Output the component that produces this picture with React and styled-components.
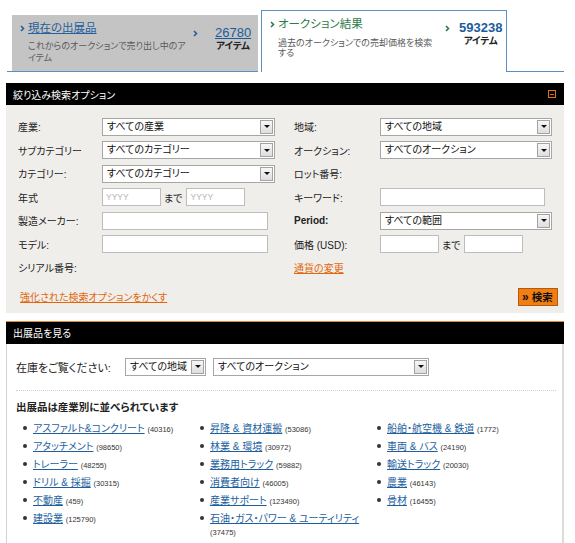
import React from "react";
import styled, { createGlobalStyle } from "styled-components";

const GlobalStyle = createGlobalStyle`
  body {
    margin: 0;
    background: #fff;
    font-family: "Liberation Sans", "Noto Sans CJK JP", sans-serif;
    font-feature-settings: "palt";
    color: #222;
  }
`;

const BLUE_LINE = "#5b8fc0";
const LINK_BLUE = "#1d5f9e";
const ORANGE = "#e2670c";

const leftFields = [
  { label: "産業:", kind: "select", value: "すべての産業", w: 173 },
  { label: "サブカテゴリー", kind: "select", value: "すべてのカテゴリー", w: 173 },
  { label: "カテゴリー:", kind: "select", value: "すべてのカテゴリー", w: 173 },
  { label: "年式", kind: "range", w: 59, placeholder: "YYYY" },
  { label: "製造メーカー:", kind: "input", w: 166 },
  { label: "モデル:", kind: "input", w: 166 },
  { label: "シリアル番号:", kind: "none" },
];

const rightFields = [
  { label: "地域:", kind: "select", value: "すべての地域", w: 172 },
  { label: "オークション:", kind: "select", value: "すべてのオークション", w: 172 },
  { label: "ロット番号:", kind: "none" },
  { label: "キーワード:", kind: "input", w: 165 },
  { label: "Period:", kind: "select", value: "すべての範囲", w: 172, latin: true },
  { label: "価格 (USD):", kind: "range", w: 59 },
  { label: "通貨の変更", kind: "link" },
];

const industries = [
  [
    ["アスファルト&コンクリート", 40316],
    ["アタッチメント", 98650],
    ["トレーラー", 48255],
    ["ドリル & 採掘", 30315],
    ["不動産", 459],
    ["建設業", 125790],
  ],
  [
    ["昇降 & 資材運搬", 53086],
    ["林業 & 環境", 30972],
    ["業務用トラック", 59882],
    ["消費者向け", 46005],
    ["産業サポート", 123490],
    ["石油・ガス・パワー & ユーティリティ", 37475],
  ],
  [
    ["船舶・航空機 & 鉄道", 1772],
    ["車両 & バス", 24190],
    ["輸送トラック", 20030],
    ["農業", 46143],
    ["骨材", 16455],
  ],
];

const Chevron = ({ color }) => (
  <svg width="5" height="7" viewBox="0 0 5 7">
    <path d="M1 1 L3.5 3.5 L1 6" fill="none" stroke={color} strokeWidth="1.6" />
  </svg>
);

const Select = ({ w, value }) => (
  <SelectBox $w={w}>
    <SelectText>{value}</SelectText>
    <SelectButton>
      <DownArrow />
    </SelectButton>
  </SelectBox>
);

const Field = ({ f }) => {
  if (f.kind === "select") return <Select w={f.w} value={f.value} />;
  if (f.kind === "input") return <TextBox $w={f.w} />;
  if (f.kind === "range")
    return (
      <RangeRow>
        <TextBox $w={f.w}>{f.placeholder && <Placeholder>{f.placeholder}</Placeholder>}</TextBox>
        <RangeSep>まで</RangeSep>
        <TextBox $w={f.w}>{f.placeholder && <Placeholder>{f.placeholder}</Placeholder>}</TextBox>
      </RangeRow>
    );
  return <span />;
};

const Tab = ({ active, title, desc, count }) => {
  const accent = active ? "#2b7a48" : "#23609c";
  const Box = active ? ActiveTab : IdleTab;
  return (
    <Box>
      <TabMain $active={active}>
        <TabTitle>
          <Chevron color={accent} />
          <TabTitleText $active={active}>{title}</TabTitleText>
        </TabTitle>
        <TabDesc $active={active}>{desc}</TabDesc>
      </TabMain>
      <TabCount $active={active}>
        <Chevron color={accent} />
        <CountBlock>
          <CountNum $active={active}>{count}</CountNum>
          <CountUnit>アイテム</CountUnit>
        </CountBlock>
      </TabCount>
    </Box>
  );
};

export default function App() {
  return (
    <>
      <GlobalStyle />
      <Page>
        <TabStrip>
          <IdleWrap>
            <Tab title="現在の出展品" desc="これからのオークションで売り出し中のアイテム" count="26780" />
          </IdleWrap>
          <Tab active title="オークション結果" desc="過去のオークションでの売却価格を検索する" count="593238" />
          <TabFiller />
        </TabStrip>

        <FilterPanel>
          <PanelHeader>
            絞り込み検索オプション
            <CollapseIcon />
          </PanelHeader>
          <FormGrid>
            {leftFields.map((lf, i) => {
              const rf = rightFields[i];
              return (
                <React.Fragment key={i}>
                  <Label>{lf.label}</Label>
                  <Field f={lf} />
                  {rf.kind === "link" ? (
                    <OrangeLink>{rf.label}</OrangeLink>
                  ) : (
                    <Label $latin={rf.latin}>{rf.label}</Label>
                  )}
                  <Field f={rf} />
                </React.Fragment>
              );
            })}
          </FormGrid>
          <FormFooter>
            <OrangeLink>強化された検索オプションをかくす</OrangeLink>
            <SearchButton>
              <span>»</span>検索
            </SearchButton>
          </FormFooter>
        </FilterPanel>

        <BrowsePanel>
          <PanelHeader $accent>出展品を見る</PanelHeader>
          <BrowseBody>
            <StockRow>
              <StockLabel>在庫をご覧ください:</StockLabel>
              <Select w={81} value="すべての地域" />
              <Select w={216} value="すべてのオークション" />
            </StockRow>
            <DottedRule />
            <SectionTitle>出展品は産業別に並べられています</SectionTitle>
            <Columns>
              {industries.map((col, ci) => (
                <List key={ci}>
                  {col.map(([name, n]) => (
                    <Item key={name}>
                      <ItemLink>{name}</ItemLink> <Count>({n})</Count>
                    </Item>
                  ))}
                </List>
              ))}
            </Columns>
          </BrowseBody>
        </BrowsePanel>
      </Page>
    </>
  );
}

const Page = styled.div`
  width: 558px;
  padding: 10px 0 0 6px;
`;

const TabStrip = styled.div`
  display: flex;
  align-items: flex-end;
  height: 62px;
`;

const IdleWrap = styled.div`
  margin-left: 1px;
  padding-left: 5px;
  width: 246px;
  border-bottom: 1px solid ${BLUE_LINE};
`;

const TabFiller = styled.div`
  flex: 1;
  border-bottom: 1px solid ${BLUE_LINE};
`;

const IdleTab = styled.div`
  display: flex;
  align-items: flex-start;
  height: 56px;
  background: #c4c4c4;
  box-sizing: border-box;
  padding: 4px 0 0 8px;
`;

const ActiveTab = styled.div`
  display: flex;
  align-items: flex-start;
  margin-left: 3px;
  width: 246px;
  height: 62px;
  box-sizing: border-box;
  border: 1px solid ${BLUE_LINE};
  border-bottom: none;
  background: #fff;
  padding: 4px 0 0 8px;
`;

const TabMain = styled.div`
  width: ${(p) => (p.$active ? "170px" : "168px")};
`;

const TabTitle = styled.div`
  display: flex;
  align-items: center;
  gap: 3px;
  height: 18px;
`;

const TabTitleText = styled.span`
  font-size: 11.5px;
  line-height: 18px;
  color: ${(p) => (p.$active ? "#2b7a48" : "#23609c")};
  text-decoration: ${(p) => (p.$active ? "none" : "underline")};
`;

const TabDesc = styled.div`
  margin: ${(p) => (p.$active ? "5px 0 0 8px" : "3px 0 0 8px")};
  width: 160px;
  font-size: 9px;
  line-height: ${(p) => (p.$active ? "10px" : "12px")};
  line-break: anywhere;
  color: #5a5a5a;
`;

const TabCount = styled.div`
  display: flex;
  align-items: flex-start;
  gap: ${(p) => (p.$active ? "9px" : "17px")};
  padding-top: ${(p) => (p.$active ? "5px" : "6px")};
  margin-left: 5px;
  svg {
    margin-top: 5px;
  }
`;

const CountBlock = styled.div`
  display: flex;
  flex-direction: column;
  align-items: center;
`;

const CountNum = styled.span`
  font-size: 13px;
  line-height: 15px;
  color: #1a5c9c;
  font-weight: ${(p) => (p.$active ? "bold" : "normal")};
  text-decoration: ${(p) => (p.$active ? "none" : "underline")};
`;

const CountUnit = styled.span`
  font-size: 9.5px;
  line-height: 12px;
  font-weight: bold;
  color: #222;
`;

const FilterPanel = styled.section`
  margin-top: 11px;
  background: #efeeeb;
  padding-bottom: 7px;
`;

const PanelHeader = styled.div`
  display: flex;
  align-items: center;
  justify-content: space-between;
  height: 22px;
  padding: 0 8px 0 7px;
  background: #000;
  color: #fff;
  font-size: 10px;
  border-top: ${(p) => (p.$accent ? "1px solid #e8853a" : "none")};
`;

const CollapseIcon = styled.span`
  position: relative;
  width: 6px;
  height: 6px;
  border: 1px solid #e2700f;
  &::after {
    content: "";
    position: absolute;
    left: 1px;
    right: 1px;
    top: 2.5px;
    height: 1px;
    background: #e2700f;
  }
`;

const FormGrid = styled.div`
  display: grid;
  grid-template-columns: 84px 192px 86px 1fr;
  grid-auto-rows: 23.5px;
  align-items: center;
  padding: 10px 6px 0 12px;
`;

const Label = styled.span`
  font-size: 10px;
  color: #222;
  font-weight: ${(p) => (p.$latin ? "bold" : "normal")};
`;

const OrangeLink = styled.a`
  font-size: 10px;
  color: ${ORANGE};
  text-decoration: underline;
  cursor: pointer;
`;

const SelectBox = styled.div`
  display: flex;
  align-items: stretch;
  width: ${(p) => p.$w}px;
  height: 18px;
  box-sizing: border-box;
  border: 1px solid #a6a6a6;
  background: #fff;
  padding: 1px;
`;

const SelectText = styled.span`
  flex: 1;
  padding-left: 3px;
  font-size: 10px;
  line-height: 14px;
  white-space: nowrap;
  overflow: hidden;
  color: #111;
`;

const SelectButton = styled.span`
  display: flex;
  align-items: center;
  justify-content: center;
  width: 13px;
  box-sizing: border-box;
  border: 1px solid #a3a3a3;
  background: linear-gradient(#f7f7f7, #dedede);
`;

const DownArrow = styled.span`
  width: 0;
  height: 0;
  border-left: 3px solid transparent;
  border-right: 3px solid transparent;
  border-top: 3px solid #111;
`;

const TextBox = styled.div`
  display: flex;
  align-items: center;
  width: ${(p) => p.$w}px;
  height: 18px;
  box-sizing: border-box;
  border: 1px solid #bdbdbd;
  background: #fff;
  padding-left: 3px;
`;

const Placeholder = styled.span`
  font-size: 8.5px;
  color: #b5b5b5;
`;

const RangeRow = styled.div`
  display: flex;
  align-items: center;
`;

const RangeSep = styled.span`
  font-size: 10px;
  white-space: nowrap;
  margin: 0 4px 0 3px;
`;

const FormFooter = styled.div`
  display: flex;
  align-items: center;
  justify-content: space-between;
  margin-top: 8px;
  padding: 0 6px 0 14px;
`;

const SearchButton = styled.button`
  display: flex;
  align-items: center;
  gap: 3px;
  height: 18px;
  width: 40px;
  padding: 0 3px;
  border: 1px solid #b45a0a;
  background: #f07e13;
  color: #111;
  font-family: inherit;
  font-size: 10.5px;
  font-weight: bold;
  span {
    font-size: 12px;
    line-height: 10px;
  }
`;

const BrowsePanel = styled.section`
  margin-top: 8px;
`;

const BrowseBody = styled.div`
  background: #fff;
  border-left: 1px solid #d2d2d2;
  border-right: 2px solid #dcdcdc;
  padding: 14px 6px 12px 9px;
`;

const StockRow = styled.div`
  display: flex;
  align-items: center;
  gap: 7px;
`;

const StockLabel = styled.span`
  font-size: 11px;
  white-space: nowrap;
  width: 102px;
  color: #222;
`;

const DottedRule = styled.div`
  margin-top: 14px;
  border-top: 1px dotted #cfcfcf;
`;

const SectionTitle = styled.div`
  margin-top: 9px;
  font-size: 10.5px;
  line-height: 14px;
  font-weight: bold;
  color: #222;
`;

const Columns = styled.div`
  display: grid;
  grid-template-columns: 177px 177px 1fr;
  margin-top: 8px;
`;

const List = styled.ul`
  margin: 0;
  padding: 0;
  list-style: none;
`;

const Item = styled.li`
  position: relative;
  margin-bottom: 5px;
  padding-left: 17px;
  padding-right: 8px;
  font-size: 10px;
  line-height: 13px;
  &::before {
    content: "";
    position: absolute;
    left: 7px;
    top: 4.5px;
    width: 4px;
    height: 4px;
    border-radius: 50%;
    background: #333;
  }
`;

const ItemLink = styled.a`
  line-height: 10px;
  color: ${LINK_BLUE};
  text-decoration: underline;
  cursor: pointer;
`;

const Count = styled.span`
  line-height: 8px;
  font-size: 7.5px;
  color: #333;
`;
